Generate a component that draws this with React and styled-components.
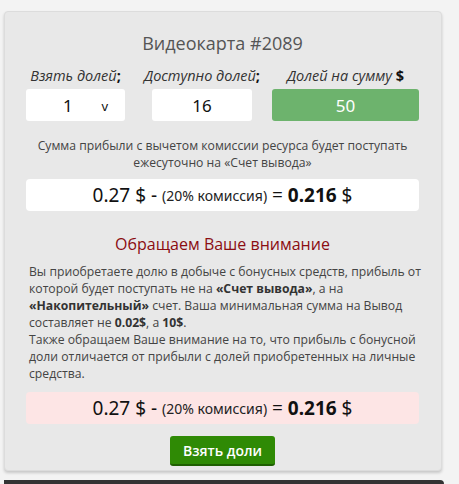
import React from 'react';
import styled, { createGlobalStyle } from 'styled-components';

const GlobalStyle = createGlobalStyle`
    html, body {
        margin: 0;
        padding: 0;
        background: #f3f3f3;
        font-family: 'Open Sans', 'Noto Sans', sans-serif;
    }
`;

const Page = styled.div`
    width: 459px;
    height: 484px;
    overflow: hidden;
    padding: 11px 0 0 4px;
    box-sizing: border-box;
`;

const Card = styled.section`
    width: 438px;
    box-sizing: border-box;
    background: #e8e8e8;
    border: 1px solid #dcdcdc;
    border-radius: 4px;
    box-shadow: 0 2px 3px rgba(0, 0, 0, 0.18);
    padding: 18px 22px 4px 21px;
    display: flex;
    flex-direction: column;
    align-items: center;
`;

const Title = styled.h2`
    margin: 0;
    font-size: 18px;
    font-weight: 400;
    color: #555;
    line-height: 26px;
`;

const Fields = styled.div`
    display: flex;
    width: 100%;
    margin-top: 10px;
`;

const Field = styled.div`
    width: ${p => p.width}px;
    margin-right: ${p => p.gap || 0}px;
    display: flex;
    flex-direction: column;
    align-items: center;
`;

const Label = styled.div`
    font-style: italic;
    font-size: 14.5px;
    color: #333;
    line-height: 20px;
    white-space: nowrap;

    b {
        font-style: normal;
        font-weight: 700;
        color: #111;
    }
`;

const Box = styled.div`
    width: 100%;
    height: 32px;
    margin-top: 3px;
    box-sizing: border-box;
    border-radius: 3px;
    background: ${p => (p.green ? '#6db36d' : '#fff')};
    color: ${p => (p.green ? '#fff' : '#111')};
    font-family: 'Noto Sans', sans-serif;
    font-size: 17px;
    display: flex;
    align-items: center;
    justify-content: center;
`;

const Select = styled(Box)`
    justify-content: space-between;
    padding: 0 17px 0 37px;
`;

const Caret = styled.span`
    font-size: 13px;
    padding-top: 1px;
`;

const Note = styled.p`
    margin: 16px 0 0;
    font-size: 12.2px;
    line-height: 17px;
    color: #444;
    text-align: center;
    white-space: nowrap;
`;

const Formula = styled.div`
    width: 100%;
    height: 32px;
    margin-top: ${p => p.top}px;
    border-radius: 4px;
    background: ${p => p.bg};
    display: flex;
    align-items: center;
    justify-content: center;
    font-family: 'Noto Sans', sans-serif;
    font-size: 19px;
    color: #111;
    white-space: pre;

    small {
        font-size: 14px;
        color: #222;
    }
    b {
        font-weight: 700;
    }
`;

const Warning = styled.h3`
    margin: 22px 0 0;
    font-size: 16px;
    font-weight: 400;
    line-height: 22px;
    color: #8b0d12;
`;

const Text = styled.p`
    align-self: stretch;
    margin: 8px 0 0 3px;
    font-size: 12.2px;
    line-height: 17px;
    color: #444;
    white-space: nowrap;

    b {
        font-weight: 700;
        color: #333;
    }
`;

const Button = styled.button`
    margin: 12px 0 0;
    width: 105px;
    height: 30px;
    border: none;
    border-bottom: 2px solid #1f5f02;
    border-radius: 3px;
    background: #2f8a05;
    color: #fff;
    font-family: 'Open Sans', sans-serif;
    font-size: 14px;
    font-weight: 600;
    cursor: pointer;
`;

const Footer = styled.div`
    margin-top: 9px;
    width: 440px;
    height: 10px;
    background: #333;
    border-top-right-radius: 4px;
`;

const formula = (
    <>
        0.27 $ - <small>(20% комиссия)</small> = <b>0.216</b> $
    </>
);

export default function App() {
    return (
        <Page>
            <GlobalStyle />
            <Card>
                <Title>Видеокарта #2089</Title>
                <Fields>
                    <Field width={99} gap={27}>
                        <Label>Взять долей<b>;</b></Label>
                        <Select>
                            <span>1</span>
                            <Caret>v</Caret>
                        </Select>
                    </Field>
                    <Field width={100} gap={20}>
                        <Label>Доступно долей<b>;</b></Label>
                        <Box>16</Box>
                    </Field>
                    <Field width={147}>
                        <Label>Долей на сумму <b>$</b></Label>
                        <Box green>50</Box>
                    </Field>
                </Fields>
                <Note>
                    Сумма прибыли с вычетом комиссии ресурса будет поступать
                    <br />
                    ежесуточно на «Счет вывода»
                </Note>
                <Formula bg="#fff" top={8}>{formula}</Formula>
                <Warning>Обращаем Ваше внимание</Warning>
                <Text>
                    Вы приобретаете долю в добыче с бонусных средств, прибыль от
                    <br />
                    которой будет поступать не на <b>«Счет вывода»</b>, а на
                    <br />
                    <b>«Накопительный»</b> счет. Ваша минимальная сумма на Вывод
                    <br />
                    составляет не <b>0.02$</b>, а <b>10$</b>.
                    <br />
                    Также обращаем Ваше внимание на то, что прибыль с бонусной
                    <br />
                    доли отличается от прибыли с долей приобретенных на личные
                    <br />
                    средства.
                </Text>
                <Formula bg="#fde5e5" top={10}>{formula}</Formula>
                <Button>Взять доли</Button>
            </Card>
            <Footer />
        </Page>
    );
}
